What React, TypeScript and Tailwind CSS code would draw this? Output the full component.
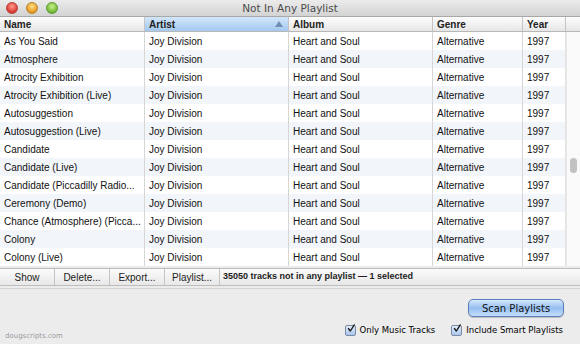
import React from 'react'

const tracks: string[] = [
  'As You Said',
  'Atmosphere',
  'Atrocity Exhibition',
  'Atrocity Exhibition (Live)',
  'Autosuggestion',
  'Autosuggestion (Live)',
  'Candidate',
  'Candidate (Live)',
  'Candidate (Piccadilly Radio...',
  'Ceremony (Demo)',
  'Chance (Atmosphere) (Picca...',
  'Colony',
  'Colony (Live)',
]

const cols = [
  { label: 'Name', w: 'w-[145px]' },
  { label: 'Artist', w: 'w-[144px]' },
  { label: 'Album', w: 'w-[144px]' },
  { label: 'Genre', w: 'w-[90px]' },
  { label: 'Year', w: 'w-[43px]' },
]

const Check: React.FC<{ label: string }> = ({ label }) => (
  <label className="flex items-center gap-[4px]">
    <span className="w-[11px] h-[11px] rounded-[2px] border border-[#7a8aa6] bg-gradient-to-b from-[#e4eefb] to-[#a9c6ec] flex items-center justify-center">
      <svg width="11" height="11" viewBox="0 0 11 11" className="-mt-[3px] ml-[1px]">
        <path d="M2 5.5 L4.5 9 L10 0.5" stroke="#1a1a1a" strokeWidth="1.8" fill="none" strokeLinecap="round" strokeLinejoin="round" />
      </svg>
    </span>
    <span className="text-[8.5px] text-black font-medium">{label}</span>
  </label>
)

const App: React.FC = () => {
  return (
    <div className="w-[580px] h-[344px] bg-[#ececec] flex flex-col overflow-hidden" style={{ fontFamily: '"Liberation Sans", Arial, sans-serif' }}>
      {/* title bar */}
      <div className="h-[17px] relative flex items-center justify-center bg-gradient-to-b from-[#ebebeb] to-[#d3d3d3] border-b border-[#a8a8a8]">
        <div className="absolute left-[6px] top-[2px] flex gap-[8px]">
          <span className="w-[12px] h-[12px] rounded-full bg-[radial-gradient(circle_at_50%_35%,#ff9c90,#e0443a_60%,#b5281f)] border border-[#b3453d]" />
          <span className="w-[12px] h-[12px] rounded-full bg-[radial-gradient(circle_at_50%_35%,#ffe08a,#eca12b_60%,#c07a12)] border border-[#b98530]" />
          <span className="w-[12px] h-[12px] rounded-full bg-[radial-gradient(circle_at_50%_35%,#c8f08e,#7fc140_60%,#4f9220)] border border-[#5f9b36]" />
        </div>
        <span className="text-[10.5px] text-[#4a4a4a] mt-[1px]" style={{ fontFamily: '"DejaVu Sans", sans-serif' }}>Not In Any Playlist</span>
      </div>

      {/* header */}
      <div className="h-[15px] flex bg-gradient-to-b from-[#fdfdfd] to-[#e6e6e6] border-b border-[#b8b8b8]">
        {cols.map((c) => (
          <div
            key={c.label}
            className={`${c.w} relative flex items-center pl-[4px] border-r border-[#c4c4c4] text-[10px] font-bold text-[#222] ${
              c.label === 'Artist' ? 'bg-gradient-to-b from-[#d3e6f9] to-[#a3c9f0]' : ''
            }`}
          >
            {c.label}
            {c.label === 'Artist' && (
              <svg width="8" height="6" viewBox="0 0 8 6" className="absolute right-[5px] top-[4px]">
                <path d="M4 0 L8 6 L0 6 Z" fill="#6f8fb5" />
              </svg>
            )}
          </div>
        ))}
        <div className="flex-1" />
      </div>

      {/* rows */}
      <div className="flex relative">
        <div className="flex flex-col">
          {tracks.map((t, i) => (
            <div key={t} className={`h-[18px] flex text-[10px] text-[#111] ${i % 2 ? 'bg-[#f2f5fa]' : 'bg-white'}`}>
              <div className="w-[145px] pl-[4px] flex items-center border-r border-[#d6d6d6] whitespace-nowrap overflow-hidden">{t}</div>
              <div className="w-[144px] pl-[4px] flex items-center border-r border-[#d6d6d6]">Joy Division</div>
              <div className="w-[144px] pl-[4px] flex items-center border-r border-[#d6d6d6]">Heart and Soul</div>
              <div className="w-[90px] pl-[4px] flex items-center border-r border-[#d6d6d6]">Alternative</div>
              <div className="w-[43px] pl-[4px] flex items-center border-r border-[#e2e2e2]">1997</div>
            </div>
          ))}
        </div>
        <div className="flex-1 bg-[#fafafa] border-l border-[#e8e8e8] flex justify-center">
          <div className="w-[7px] h-[15px] mt-[126px] rounded-full bg-[#c2c2c2]" />
        </div>
      </div>

      {/* button bar */}
      <div className="h-[18px] mt-[2px] flex items-stretch bg-gradient-to-b from-[#fbfbfb] to-[#e8e8e8] border-y border-[#bdbdbd] text-[10px] text-[#222]">
        {['Show', 'Delete...', 'Export...', 'Playlist...'].map((b) => (
          <div key={b} className="w-[55px] flex items-center justify-center border-r border-[#c4c4c4]">{b}</div>
        ))}
        <div className="flex items-center pl-[3px] font-bold text-[9px]">35050 tracks not in any playlist — 1 selected</div>
      </div>
      <div className="h-[3px] border-b border-[#d4d4d4]" />

      {/* bottom panel */}
      <div className="flex-1 relative flex flex-col items-end pr-[16px] pt-[10px]" style={{ fontFamily: '"DejaVu Sans", sans-serif' }}>
        <div className="w-[96px] h-[18px] rounded-[5px] border border-[#5a7fb8] bg-gradient-to-b from-[#d8e8fb] via-[#94bef0] to-[#c5defa] flex items-center justify-center text-[10px] text-[#111] shadow-[0_1px_1px_rgba(0,0,0,0.2)]">
          Scan Playlists
        </div>
        <div className="flex gap-[16px] mt-[7px] mr-[1px]">
          <Check label="Only Music Tracks" />
          <Check label="Include Smart Playlists" />
        </div>
        <span className="absolute left-[5px] bottom-[3px] text-[7px] text-[#9a9a9a]">dougscripts.com</span>
      </div>
    </div>
  )
}

export default App
